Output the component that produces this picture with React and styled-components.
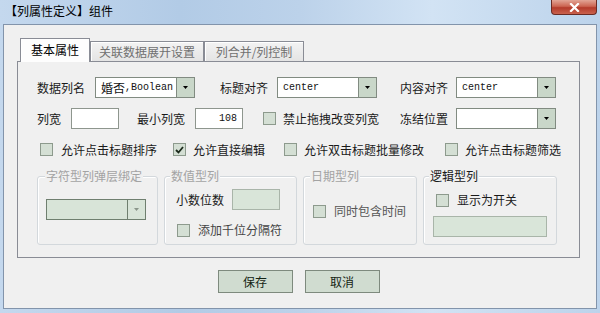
import React from "react";
import styled, { createGlobalStyle } from "styled-components";

const Global = createGlobalStyle`
  html, body { margin: 0; padding: 0; }
  body {
    font-family: "Noto Sans CJK SC", "Noto Sans", sans-serif;
    font-size: 12px;
    color: #1a1a1a;
  }
`;

const Window = styled.div`
  width: 600px;
  height: 313px;
  box-sizing: border-box;
  display: flex;
  flex-direction: column;
  overflow: hidden;
  background: linear-gradient(90deg, #c4d8ee 0%, #b2cbe6 30%, #bcd2ea 50%, #d2e3f4 72%, #bcd3eb 100%);
`;

const TitleBar = styled.div`
  height: 24px;
  flex: none;
  display: flex;
  justify-content: space-between;
  align-items: flex-start;
  padding: 0 3px 0 5px;
`;

const TitleText = styled.div`
  line-height: 22px;
  font-size: 12px;
  color: #000;
`;

const CloseButton = styled.div`
  width: 46px;
  height: 15px;
  box-sizing: border-box;
  border: 1px solid #6a2b24;
  border-top: none;
  border-radius: 0 0 4px 4px;
  background: linear-gradient(#e2a596, #cc6552 45%, #b43b2b 55%, #c9624e);
  display: flex;
  align-items: center;
  justify-content: center;
`;

const Client = styled.div`
  flex: 1;
  margin: 0 3px 4px 3px;
  border: 1px solid #8294ab;
  background: #f0f0f0;
  display: flex;
  flex-direction: column;
  padding: 13px 16px 0 13px;
`;

const TabStrip = styled.div`
  display: flex;
  align-items: flex-end;
  margin-left: 3px;
  height: 24px;
  margin-bottom: -1px;
  position: relative;
  z-index: 1;
`;

const Tab = styled.div`
  box-sizing: border-box;
  width: ${(p) => p.$w}px;
  height: ${(p) => (p.$active ? 24 : 20)}px;
  margin-bottom: ${(p) => (p.$active ? 0 : 1)}px;
  padding-bottom: ${(p) => (p.$active ? 3 : 0)}px;
  border: 1px solid #898c95;
  border-bottom: none;
  box-shadow: inset 1px 1px 0 #fff;
  background: ${(p) => (p.$active ? "#fdfdfd" : "linear-gradient(#f3f3f3, #e4e4e4)")};
  color: ${(p) => (p.$active ? "#000" : "#707070")};
  display: flex;
  align-items: center;
  justify-content: center;
  font-size: 12px;
  white-space: nowrap;
`;

const Panel = styled.div`
  box-sizing: border-box;
  width: 563px;
  height: 197px;
  border: 1px solid #898c95;
  background: #f0f0f0;
  padding: 15px 0 0 19px;
  display: flex;
  flex-direction: column;
`;

const Row = styled.div`
  display: flex;
  align-items: center;
  height: 21px;
  margin-top: ${(p) => p.$mt || 0}px;
  padding-left: ${(p) => p.$pl || 0}px;
`;

const Cell = styled.div`
  display: flex;
  align-items: center;
  flex: none;
  width: ${(p) => (p.$w ? `${p.$w}px` : "auto")};
  gap: ${(p) => p.$gap ?? 10}px;
`;

const Label = styled.span`
  white-space: nowrap;
  font-size: 12px;
  line-height: 16px;
  color: ${(p) => p.$color || "#1a1a1a"};
`;

const SelectBox = styled.div`
  box-sizing: border-box;
  width: ${(p) => p.$w}px;
  height: 21px;
  border: 1px solid ${(p) => (p.$disabled ? "#6f7f6f" : "#818b81")};
  background: ${(p) => (p.$disabled ? "#d8e4d8" : "#fff")};
  display: flex;
  flex: none;
`;

const SelectValue = styled.div`
  flex: 1;
  padding-left: 5px;
  display: flex;
  align-items: center;
  font-family: "Liberation Mono", monospace;
  font-size: 10px;
  color: #111;
  white-space: nowrap;
  overflow: hidden;
`;

const Cjk = styled.span`
  font-family: "Noto Sans CJK SC", sans-serif;
  font-size: 12px;
`;

const SelectArrow = styled.div`
  width: 17px;
  border-left: 1px solid ${(p) => (p.$disabled ? "#6f7f6f" : "#818b81")};
  background: ${(p) => (p.$disabled ? "#d8e4d8" : "#c9d7c9")};
  display: flex;
  align-items: center;
  justify-content: center;
`;

const TextInput = styled.div`
  box-sizing: border-box;
  width: ${(p) => p.$w}px;
  height: 21px;
  flex: none;
  border: 1px solid ${(p) => (p.$disabled ? "#a9b5a9" : "#8e968e")};
  background: ${(p) => (p.$disabled ? "#d9e5d9" : "#fff")};
  display: flex;
  align-items: center;
  justify-content: flex-end;
  padding-right: 5px;
  font-family: "Liberation Mono", monospace;
  font-size: 10px;
  color: #111;
  margin-top: ${(p) => p.$mt || 0}px;
`;

const CheckItem = styled.div`
  display: flex;
  align-items: center;
  gap: ${(p) => p.$gap ?? 7}px;
  width: ${(p) => (p.$w ? `${p.$w}px` : "auto")};
  flex: none;
  margin-top: ${(p) => p.$mt || 0}px;
  padding-left: ${(p) => p.$pl || 0}px;
`;

const Box = styled.span`
  box-sizing: border-box;
  width: 13px;
  height: 13px;
  flex: none;
  border: 1px solid #8d9a8d;
  background: #d4dfd4;
  display: flex;
  align-items: center;
  justify-content: center;
`;

const GroupRow = styled.div`
  display: flex;
  margin-top: 16px;
  gap: 6px;
`;

const GroupBox = styled.div`
  position: relative;
  box-sizing: border-box;
  width: ${(p) => p.$w}px;
  height: 69px;
  border: 1px solid #d3d8dc;
  border-radius: 3px;
  box-shadow: inset 1px 1px 0 #fff;
  padding: ${(p) => p.$pad};
  display: flex;
  flex-direction: column;
  flex: none;
`;

const Legend = styled.span`
  position: absolute;
  top: -9px;
  left: ${(p) => p.$left ?? 6}px;
  padding: 0 1px;
  background: #f0f0f0;
  line-height: 16px;
  font-size: 12px;
  white-space: nowrap;
  color: ${(p) => p.$color || "#1a1a1a"};
`;

const ButtonRow = styled.div`
  display: flex;
  justify-content: center;
  gap: 12px;
  margin-top: 12px;
`;

const Button = styled.button`
  box-sizing: border-box;
  width: 75px;
  height: 23px;
  border: 1px solid #7e8a7e;
  background: #d0dcd0;
  font-family: "Noto Sans CJK SC", sans-serif;
  font-size: 12px;
  color: #142414;
  padding: 0;
`;

const Arrow = ({ color = "#000" }) => (
  <svg width="5" height="3" viewBox="0 0 5 3">
    <polygon points="0,0 5,0 2.5,3" fill={color} />
  </svg>
);

const Select = ({ w, value, disabled, children }) => (
  <SelectBox $w={w} $disabled={disabled}>
    <SelectValue>{children ?? value}</SelectValue>
    <SelectArrow $disabled={disabled}>
      <Arrow color={disabled ? "#8a958a" : "#000"} />
    </SelectArrow>
  </SelectBox>
);

const Check = ({ checked, label, color, ...rest }) => (
  <CheckItem {...rest}>
    <Box>
      {checked && (
        <svg width="9" height="8" viewBox="0 0 9 8">
          <path d="M1 4 L3.5 6.5 L8 1" stroke="#1c2a1c" strokeWidth="1.8" fill="none" />
        </svg>
      )}
    </Box>
    <Label $color={color}>{label}</Label>
  </CheckItem>
);

export default function App() {
  return (
    <>
      <Global />
      <Window>
        <TitleBar>
          <TitleText>【列属性定义】组件</TitleText>
          <CloseButton>
            <svg width="11" height="9" viewBox="0 0 11 9">
              <path d="M2 1 L9 8 M9 1 L2 8" stroke="#fff" strokeWidth="2.2" strokeLinecap="square" />
            </svg>
          </CloseButton>
        </TitleBar>
        <Client>
          <TabStrip>
            <Tab $active $w={70}>基本属性</Tab>
            <Tab $w={114}>关联数据展开设置</Tab>
            <Tab $w={100}>列合并/列控制</Tab>
          </TabStrip>
          <Panel>
            <Row>
              <Cell $w={183}>
                <Label>数据列名</Label>
                <Select w={100}>
                  <Cjk>婚否</Cjk>,Boolean
                </Select>
              </Cell>
              <Cell $w={180} $gap={9}>
                <Label>标题对齐</Label>
                <Select w={100} value="center" />
              </Cell>
              <Cell $gap={8}>
                <Label>内容对齐</Label>
                <Select w={100} value="center" />
              </Cell>
            </Row>
            <Row $mt={10}>
              <Cell $w={100}>
                <Label>列宽</Label>
                <TextInput $w={48} />
              </Cell>
              <Cell $w={126}>
                <Label>最小列宽</Label>
                <TextInput $w={48}>108</TextInput>
              </Cell>
              <Check $w={137} label="禁止拖拽改变列宽" />
              <Cell $gap={8}>
                <Label>冻结位置</Label>
                <Select w={100} value="" />
              </Cell>
            </Row>
            <Row $mt={10} $pl={3}>
              <Check $w={133} $gap={8} label="允许点击标题排序" />
              <Check $w={111} checked label="允许直接编辑" />
              <Check $w={161} label="允许双击标题批量修改" />
              <Check label="允许点击标题筛选" />
            </Row>
            <GroupRow>
              <GroupBox $w={121} $pad="22px 0 0 8px">
                <Legend $left={7} $color="#a3a3a3">字符型列弹层绑定</Legend>
                <Select w={100} disabled value="" />
              </GroupBox>
              <GroupBox $w={133} $pad="12px 0 0 11px">
                <Legend $left={5} $color="#a3a3a3">数值型列</Legend>
                <Row>
                  <Cell $gap={8}>
                    <Label>小数位数</Label>
                    <TextInput $w={48} $disabled />
                  </Cell>
                </Row>
                <Check $mt={12} $pl={1} $gap={8} label="添加千位分隔符" color="#444" />
              </GroupBox>
              <GroupBox $w={114} $pad="26px 0 0 9px">
                <Legend $color="#a3a3a3">日期型列</Legend>
                <Check $gap={8} label="同时包含时间" color="#555" />
              </GroupBox>
              <GroupBox $w={134} $pad="15px 0 0 9px">
                <Legend $left={5}>逻辑型列</Legend>
                <Check $pl={3} $gap={8} label="显示为开关" />
                <TextInput $w={114} $mt={8} $disabled />
              </GroupBox>
            </GroupRow>
          </Panel>
          <ButtonRow>
            <Button>保存</Button>
            <Button>取消</Button>
          </ButtonRow>
        </Client>
      </Window>
    </>
  );
}
